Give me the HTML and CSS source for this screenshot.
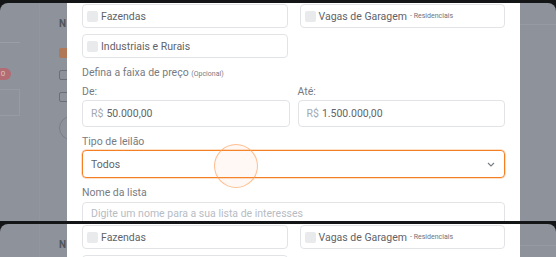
FILE: index.html
```html
<!DOCTYPE html>
<html lang="pt-br">
<head>
    <meta charset="UTF-8">
    <meta name="viewport" content="width=device-width, initial-scale=1.0">
    <title>Lista de interesses</title>
    <link rel="stylesheet" href="styles.css">
</head>
<body>
    <div class="bezel"></div>

    <div class="screen screen-main">
        <div class="backdrop-left">
            <div class="bg-side">
                <div class="bg-rule"></div>
                <div class="bg-pill">0</div>
                <div class="bg-card"></div>
            </div>
            <div class="bg-list">
                <div class="bg-title">N</div>
                <div class="bg-check bg-check-on"></div>
                <div class="bg-check"></div>
                <div class="bg-check"></div>
                <div class="bg-radio"></div>
            </div>
        </div>

        <div class="modal">
            <div class="grid-2">
                <div class="check-box"><span class="check"></span>Fazendas</div>
                <div class="check-box"><span class="check"></span>Vagas de Garagem <small>- Residenciais</small></div>
                <div class="check-box"><span class="check"></span>Industriais e Rurais</div>
            </div>

            <div class="label label-section">Defina a faixa de preço <small>(Opcional)</small></div>
            <div class="grid-price">
                <div>
                    <div class="label">De:</div>
                    <div class="input"><span class="prefix">R$</span>50.000,00</div>
                </div>
                <div>
                    <div class="label">Até:</div>
                    <div class="input"><span class="prefix">R$</span>1.500.000,00</div>
                </div>
            </div>

            <div class="label label-section">Tipo de leilão</div>
            <div class="input select">
                <span>Todos</span>
                <svg class="chevron" width="8" height="5" viewBox="0 0 8 5"><path d="M1 1l3 3 3-3" fill="none" stroke="#7a7e85" stroke-width="1.2"/></svg>
                <span class="touch"></span>
            </div>

            <div class="label label-section">Nome da lista</div>
            <div class="input placeholder">Digite um nome para a sua lista de interesses</div>
        </div>

        <div class="backdrop-right">
            <div class="bg-rule-right"></div>
        </div>
    </div>

    <div class="seam"></div>

    <div class="screen screen-next">
        <div class="backdrop-left">
            <div class="bg-side"></div>
            <div class="bg-list">
                <div class="bg-title">N</div>
            </div>
        </div>

        <div class="modal">
            <div class="grid-2">
                <div class="check-box"><span class="check"></span>Fazendas</div>
                <div class="check-box"><span class="check"></span>Vagas de Garagem <small>- Residenciais</small></div>
                <div class="check-box"><span class="check"></span>Industriais e Rurais</div>
            </div>
        </div>

        <div class="backdrop-right">
            <div class="bg-rule-right"></div>
        </div>
    </div>
</body>
</html>
```

FILE: styles.css
```css
* {
    box-sizing: border-box;
}
body {
    margin: 0;
    width: 556px;
    height: 257px;
    overflow: hidden;
    background-color: #141516;
    font-family: Roboto, "Liberation Sans", sans-serif;
    font-size: 10px;
    color: #5f6369;
}
.bezel {
    height: 3px;
}
.seam {
    height: 3px;
}
.screen {
    display: flex;
    overflow: hidden;
    border-radius: 8px 8px 0 0;
    background-color: #8e929b;
}
.screen-main {
    height: 218px;
}
.screen-next {
    height: 33px;
}

/* fundo escurecido */
.backdrop-left {
    width: 67px;
    flex-shrink: 0;
    display: flex;
}
.bg-side {
    width: 40px;
    border-right: 1px solid #92969f;
    padding-top: 39px;
}
.bg-rule {
    width: 20px;
    border-top: 1px solid #9a9ea6;
}
.bg-pill {
    width: 16px;
    height: 12px;
    margin: 25px 0 0 -5px;
    border-radius: 6px;
    background-color: #b36b74;
    color: #d9c3c6;
    font-size: 8px;
    line-height: 12px;
    text-align: center;
}
.bg-card {
    width: 20px;
    height: 27px;
    margin-top: 9px;
    border: 1px solid #979ba3;
    border-left: none;
}
.bg-list {
    margin-left: 19px;
    width: 8px;
    overflow: hidden;
    padding-top: 16px;
}
.bg-title {
    font-weight: bold;
    font-size: 10px;
    color: #50545b;
    line-height: 10px;
}
.bg-check {
    width: 10px;
    height: 10px;
    margin-top: 12px;
    border: 1px solid #6b6f77;
    border-radius: 2px;
}
.bg-check-on {
    margin-top: 19px;
    border-color: #b07856;
    background-color: #b07856;
}
.bg-radio {
    width: 24px;
    height: 24px;
    margin-top: 14px;
    border: 1px solid #7a7e86;
    border-radius: 50%;
}
.backdrop-right {
    flex: 1;
    padding-top: 21px;
}
.bg-rule-right {
    border-top: 1px solid #969aa2;
}

/* modal */
.modal {
    width: 453px;
    flex-shrink: 0;
    background-color: #fff;
    padding: 1px 15px 0;
}
.grid-2 {
    display: grid;
    grid-template-columns: 1fr 1fr;
    column-gap: 12px;
    row-gap: 6px;
}
.grid-price {
    display: grid;
    grid-template-columns: 1fr 1fr;
    column-gap: 8px;
}
.check-box {
    height: 24px;
    border: 1px solid #e1e3e7;
    border-radius: 4px;
    display: flex;
    align-items: center;
    padding-left: 4px;
    font-size: 10.5px;
}
.check-box small {
    font-size: 7px;
    margin-left: 3px;
    color: #6f737a;
}
.check {
    width: 11px;
    height: 11px;
    border-radius: 2px;
    background-color: #e9eaec;
    margin-right: 3px;
}
.label {
    color: #777b82;
    font-size: 10.5px;
    line-height: 14px;
    margin-top: 4px;
    margin-bottom: 1px;
}
.label-section {
    margin-top: 8px;
    margin-bottom: 0;
}
.label small {
    font-size: 7px;
}
.input {
    height: 27px;
    border: 1px solid #e1e3e7;
    border-radius: 4px;
    display: flex;
    align-items: center;
    padding-left: 8px;
    font-size: 10.5px;
}
.prefix {
    color: #a3a8b0;
    margin-right: 3px;
}
.select {
    position: relative;
    height: 28px;
    margin-top: 1px;
    border-color: #f58024;
    box-shadow: 0 0 0 0.5px rgba(245, 128, 36, 0.5);
    justify-content: space-between;
    padding-right: 9px;
}
.chevron {
    display: block;
}
.touch {
    position: absolute;
    left: 131px;
    top: -7px;
    width: 44px;
    height: 44px;
    border-radius: 50%;
    border: 1.5px solid rgba(255, 160, 90, 0.65);
    background-color: rgba(255, 170, 110, 0.08);
}
.placeholder {
    margin-top: 2px;
    height: 28px;
    align-items: flex-start;
    padding-top: 4px;
    line-height: 14px;
    color: #b7bcc4;
}
```
